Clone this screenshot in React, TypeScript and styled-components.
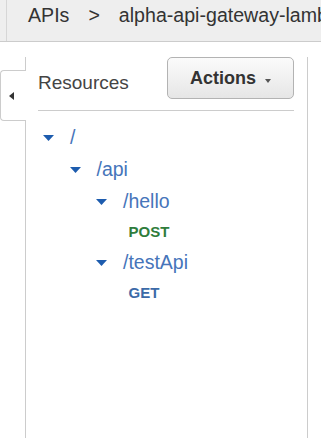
import React from "react";
import styled, { createGlobalStyle } from "styled-components";

const GlobalStyle = createGlobalStyle`
  html, body { margin: 0; padding: 0; background: #fff; }
  body { font-family: "Liberation Sans", Arial, sans-serif; }
  * { box-sizing: border-box; }
`;

const Page = styled.div`
  display: flex;
  flex-direction: column;
  height: 100vh;
  overflow: hidden;
`;

const TopBar = styled.div`
  display: flex;
  height: 42px;
  flex: none;
  background: #eeeeee;
  border-bottom: 1px solid #cccccc;
`;

const BarEdge = styled.div`
  width: 7px;
  flex: none;
  border-right: 1px solid #d6d6d6;
`;

const Crumbs = styled.div`
  display: flex;
  align-items: flex-start;
  gap: 19px;
  padding: 4px 0 0 21px;
  font-size: 19.6px;
  line-height: 22px;
  color: #333;
  white-space: nowrap;
  overflow: hidden;
`;

const Crumb = styled.span``;

const Main = styled.div`
  display: flex;
  flex: 1;
  margin-top: 15px;
  min-height: 0;
`;

const Rail = styled.div`
  display: flex;
  flex-direction: column;
  width: 26px;
  flex: none;
`;

const RailLine = styled.div<{ $grow?: boolean; $h?: number }>`
  border-right: 1px solid #cccccc;
  ${(p) => (p.$grow ? "flex: 1;" : `height: ${p.$h}px;`)}
`;

const Tab = styled.div`
  display: flex;
  align-items: center;
  height: 51px;
  padding-left: 8px;
  border: 1px solid #cccccc;
  border-right: none;
  border-radius: 4px 0 0 4px;
  background: #fff;
`;

const LeftArrow = styled.span`
  width: 0;
  height: 0;
  border-top: 4.5px solid transparent;
  border-bottom: 4.5px solid transparent;
  border-right: 5px solid #333;
`;

const Panel = styled.div`
  width: 282px;
  flex: none;
  border-right: 1px solid #cccccc;
  padding: 0 13px 0 12px;
`;

const Header = styled.div`
  display: flex;
  justify-content: space-between;
  align-items: flex-start;
  padding-bottom: 11px;
  border-bottom: 1px solid #cccccc;
`;

const Title = styled.h2`
  margin: 15px 0 0 0;
  font-size: 19px;
  line-height: 22px;
  font-weight: normal;
  color: #444;
`;

const ActionsButton = styled.button`
  display: flex;
  align-items: center;
  justify-content: center;
  gap: 9px;
  width: 127px;
  height: 42px;
  padding: 0;
  border: 1px solid #b3b3b3;
  border-radius: 5px;
  background: linear-gradient(#fbfbfb, #e6e6e6);
  font-family: "Liberation Sans", Arial, sans-serif;
  font-weight: bold;
  font-size: 18px;
  color: #333;
`;

const Caret = styled.span`
  width: 0;
  height: 0;
  margin-top: 5px;
  border-left: 3.5px solid transparent;
  border-right: 3.5px solid transparent;
  border-top: 4px solid #555;
`;

const Tree = styled.div`
  display: flex;
  flex-direction: column;
  padding-top: 10px;
`;

const ResourceRow = styled.div<{ $level: number }>`
  display: flex;
  align-items: center;
  height: 32px;
  padding-left: ${(p) => 5 + p.$level * 26.5}px;
  gap: 16px;
  font-size: 19.5px;
  color: #4675ba;
`;

const Toggle = styled.svg`
  flex: none;
  margin-top: 2px;
`;

const MethodRow = styled.div<{ $level: number; $method: "GET" | "POST" }>`
  display: flex;
  align-items: center;
  height: 29px;
  padding-left: ${(p) => 5 + p.$level * 26.5 + 6}px;
  font-size: 15px;
  font-weight: bold;
  color: ${(p) => (p.$method === "POST" ? "#2f7d3c" : "#3b6aa8")};
`;

type Node = {
  path: string;
  methods?: ("GET" | "POST")[];
  children?: Node[];
};

const tree: Node = {
  path: "/",
  children: [
    {
      path: "/api",
      children: [
        { path: "/hello", methods: ["POST"] },
        { path: "/testApi", methods: ["GET"] },
      ],
    },
  ],
};

function renderNode(node: Node, level: number): React.ReactNode[] {
  const out: React.ReactNode[] = [];
  out.push(
    <ResourceRow key={`${node.path}-${level}`} $level={level}>
      <Toggle width="11" height="6" viewBox="0 0 11 6">
        <path d="M0 0 L11 0 L5.5 6 Z" fill="#1d5cae" />
      </Toggle>
      <span>{node.path}</span>
    </ResourceRow>
  );
  (node.methods || []).forEach((m) => {
    out.push(
      <MethodRow key={`${node.path}-${m}`} $level={level + 1} $method={m}>
        {m}
      </MethodRow>
    );
  });
  (node.children || []).forEach((c) => out.push(...renderNode(c, level + 1)));
  return out;
}

export default function App() {
  return (
    <>
      <GlobalStyle />
      <Page>
        <TopBar>
          <BarEdge />
          <Crumbs>
            <Crumb>APIs</Crumb>
            <Crumb>&gt;</Crumb>
            <Crumb>alpha-api-gateway-lambda</Crumb>
          </Crumbs>
        </TopBar>
        <Main>
          <Rail>
            <RailLine $h={13} />
            <Tab>
              <LeftArrow />
            </Tab>
            <RailLine $grow />
          </Rail>
          <Panel>
            <Header>
              <Title>Resources</Title>
              <ActionsButton>
                Actions
                <Caret />
              </ActionsButton>
            </Header>
            <Tree>{renderNode(tree, 0)}</Tree>
          </Panel>
        </Main>
      </Page>
    </>
  );
}
